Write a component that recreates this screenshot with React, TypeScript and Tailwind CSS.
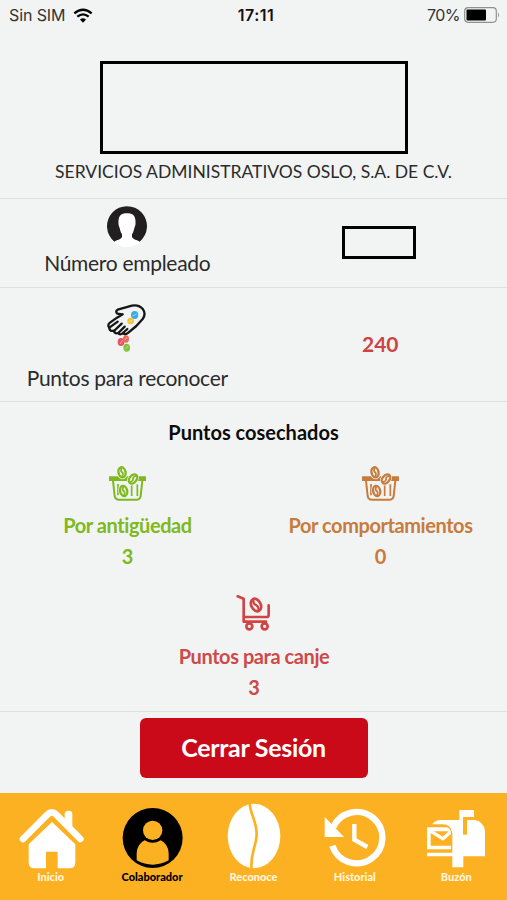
import type { ReactNode } from 'react';
import { clsx } from 'clsx';

function WifiIcon() {
  return (
    <svg className="w-5 h-[15px]" viewBox="222 20 60 45" fill="none" stroke="#000" strokeWidth="7">
      <path d="M226 36Q252 14 278 36" />
      <path d="M235 46Q252 32 269 46" />
      <path d="M252 64L243 54.500Q252 47 261 54.500Z" fill="#000" stroke="none" />
    </svg>
  );
}

function BatteryIcon() {
  return (
    <svg className="w-9 h-4" viewBox="0 0 36 16" fill="none">
      <rect x="0.7" y="0.7" width="31.600" height="14.600" rx="3.500" stroke="#8f9090" strokeWidth="1.200" />
      <rect x="2.500" y="2.500" width="19.500" height="11" rx="1" fill="#000" />
      <path d="M34 5.500Q36 8 34 10.500Z" fill="#8f9090" />
    </svg>
  );
}

function AvatarIcon() {
  return (
    <svg className="w-[42px] h-[42px]" viewBox="0 0 126 126">
      <circle cx="63" cy="63" r="60" fill="#fff" />
      <path d="M25 107A60 60 0 1 1 101 107C94 101 80 101 78 92V85C84 77 84 67 88 58C91 32 84 22 63 22C42 22 35 32 38 58C42 67 42 77 48 85V92C46 101 32 101 25 107Z" fill="#221f20" />
    </svg>
  );
}

function HandIcon() {
  return (
    <svg className="w-[42px] h-[52px]" viewBox="52 38 126 156" fill="none">
      <path
        d="M101 72L86 70Q79 64 87 58L130 46Q151 42 163 57Q173 71 162 86L143 107L119 127Q109 136 103 128Q94 136 88 128Q78 132 76 121Q62 124 62 112Q55 104 64 97L85 82L102 72"
        stroke="#161616" strokeWidth="7" strokeLinejoin="round" strokeLinecap="round"
      />
      <path d="M62 112L87 94M76 122L99 100M89 128L108 109M103 128L116 116" stroke="#161616" strokeWidth="7" strokeLinecap="round" />
      <ellipse cx="138" cy="74" rx="11" ry="12" fill="#3cabe4" />
      <ellipse cx="126" cy="92" rx="10" ry="10" fill="#f6c431" />
      <ellipse cx="97" cy="155" rx="10" ry="12" fill="#e95262" />
      <ellipse cx="112" cy="146" rx="9" ry="11" fill="#ee6655" />
      <ellipse cx="114" cy="172" rx="10" ry="12" fill="#80c13d" />
      <path d="M132 77L144 71M120 95L132 89M94 161L102 149M108 150L116 140M109 178L119 166" stroke="#f2f4f4" strokeWidth="1.500" />
    </svg>
  );
}

function Bean({ x, y, angle }: { x: number; y: number; angle: number }) {
  return (
    <g transform={`translate(${x} ${y}) rotate(${angle})`}>
      <ellipse rx="16" ry="21" fill="#f2f4f4" />
      <ellipse rx="10.500" ry="15.500" fill="none" stroke="currentColor" strokeWidth="7" />
      <path d="M2 -13Q-5 -4 0 0Q5 4 -2 13" fill="none" stroke="currentColor" strokeWidth="5" />
    </g>
  );
}

function BasketIcon() {
  return (
    <svg className="w-10 h-9" viewBox="54 31 120 108" fill="none">
      <path d="M57 62H168V76H57Z" fill="currentColor" />
      <path d="M69 75L74 121Q76 132 87 132H139Q150 132 152 121L157 75" stroke="currentColor" strokeWidth="6" />
      <path d="M84 85V119M125 86V121M142 86V121" stroke="currentColor" strokeWidth="5" />
      <Bean x={96} y={50} angle={-12} />
      <Bean x={129} y={70} angle={38} />
      <Bean x={101} y={106} angle={-14} />
    </svg>
  );
}

function CartIcon() {
  return (
    <svg className="w-[38px] h-10" viewBox="47 27 114 120" fill="none" stroke="#d04444" strokeWidth="8" strokeLinecap="round" strokeLinejoin="round">
      <path d="M55 37L73 44V113H140" />
      <path d="M75 99H142Q148 99 148 92V64" />
      <circle cx="90" cy="127" r="9" fill="#f2f4f4" />
      <circle cx="136" cy="127" r="9" fill="#f2f4f4" />
      <ellipse cx="110" cy="63" rx="14" ry="20" transform="rotate(-28 110 63)" />
      <path d="M102 47Q101 60 110 63Q118 67 118 79" strokeWidth="7" />
    </svg>
  );
}

function HomeIcon() {
  return (
    <svg className="w-[68px] h-[66px]" viewBox="50 39 204 198">
      <path d="M193 110V71Q193 62 205 62Q216 62 216 71V124Z" fill="#fff" />
      <path d="M76 155L143 88Q155 76 167 88L232 155" fill="none" stroke="#fcb122" strokeWidth="22" />
      <path d="M68 147L141 74Q154 60 168 74L240 147" fill="none" stroke="#fff" strokeWidth="20" strokeLinecap="round" />
      <path d="M85 163L155 96L225 163V217Q225 235 208 235H172V185H137V235H102Q85 235 85 217Z" fill="#fff" />
    </svg>
  );
}

function UserIcon() {
  return (
    <svg className="w-[68px] h-[66px]" viewBox="354 39 204 198">
      <circle cx="458" cy="144" r="90" fill="#000" />
      <circle cx="458" cy="121" r="29" fill="#fcb122" />
      <path d="M410 211V190Q411 162 434 151Q458 166 482 151Q505 162 506 190V211Q458 237 410 211Z" fill="#fcb122" />
    </svg>
  );
}

function CoffeeBeanIcon() {
  return (
    <svg className="w-[68px] h-[66px]" viewBox="658 39 204 198">
      <ellipse cx="763" cy="138" rx="79" ry="97" fill="#fff" />
      <path d="M750 36C750 72 771 91 771 132C771 168 750 190 756 240" fill="none" stroke="#fcb122" strokeWidth="8" />
    </svg>
  );
}

function HistoryIcon() {
  return (
    <svg className="w-[68px] h-[66px]" viewBox="201 39 204 198" fill="none" stroke="#fff">
      <path d="M238 111A77 77 0 1 1 235 167" strokeWidth="19" />
      <path d="M212 81V141H270Z" fill="#fff" stroke="none" />
      <path d="M301 102V149L340 171" strokeWidth="13" />
    </svg>
  );
}

function MailboxIcon() {
  return (
    <svg className="w-[68px] h-[66px]" viewBox="505 39 204 198">
      <path d="M535 103Q545 90 562 90H663Q691 94 694 124V199H629V232H596V199H520V188H596V130Q592 103 568 103Z" fill="#fff" />
      <path d="M520 112H580Q592 117 592 132V178H520Z" fill="#fff" />
      <path d="M531 124H582Q592 128 592 140V167H531Z" fill="#fcb122" />
      <path d="M528 122L568 146L588 128" fill="none" stroke="#fff" strokeWidth="10" />
      <path d="M628 81H640V134H628Z" fill="#fcb122" />
      <path d="M617 60H661V81H628V95H617Z" fill="#fff" />
    </svg>
  );
}

interface TabProps {
  label: string;
  icon: ReactNode;
  active?: boolean;
}

function Tab({ label, icon, active }: TabProps) {
  return (
    <button className="flex flex-col items-center pt-[10px]">
      {icon}
      <span className={clsx('text-[11px] leading-4 font-black', active ? 'text-black' : 'text-[#fff6dc]')}>{label}</span>
    </button>
  );
}

interface PointsProps {
  label: string;
  value: number;
  icon: ReactNode;
  className: string;
}

function Points({ label, value, icon, className }: PointsProps) {
  return (
    <div className={clsx('flex flex-col items-center font-bold text-[20px] leading-[31px]', className)}>
      {icon}
      <span className="mt-2 whitespace-nowrap tracking-[-0.43px]">{label}</span>
      <span>{value}</span>
    </div>
  );
}

export default function App() {
  return (
    <div className="w-[507px] h-[900px] flex flex-col overflow-hidden bg-[#f2f4f4] text-[#2b2b2b] font-['Lato',sans-serif]">
      {/* Status bar */}
      <div className="h-[30px] shrink-0 grid grid-cols-3 items-center pl-[9px] pr-[7px] font-['Inter',sans-serif] text-[16px] text-[#333]">
        <div className="flex items-center gap-2">
          <span className="tracking-[-0.1px]">Sin SIM</span>
          <WifiIcon />
        </div>
        <span className="pl-[3px] text-center font-semibold tracking-[0.5px] text-[#111]">17:11</span>
        <div className="flex items-center justify-end gap-1">
          <span className="tracking-[-0.5px]">70%</span>
          <BatteryIcon />
        </div>
      </div>

      {/* Company */}
      <div className="h-[169px] shrink-0 flex flex-col items-center pt-[31px] border-b border-[#dfe1e1]">
        <div className="w-[308px] h-[93px] border-[3px] border-black" />
        <span className="mt-[6px] text-[17.5px] leading-6 whitespace-nowrap">SERVICIOS ADMINISTRATIVOS OSLO, S.A. DE C.V.</span>
      </div>

      {/* Employee number */}
      <div className="h-[89px] shrink-0 grid grid-cols-2 border-b border-[#dfe1e1]">
        <div className="flex flex-col items-center pt-[7px] pl-px">
          <AvatarIcon />
          <span className="mt-px text-[21px] leading-7 tracking-[-0.3px]">Número empleado</span>
        </div>
        <div className="flex items-center justify-center pr-[3px] pb-px">
          <div className="w-[74px] h-[33px] border-[3px] border-black" />
        </div>
      </div>

      {/* Points to give */}
      <div className="h-[114px] shrink-0 grid grid-cols-2 border-b border-[#dfe1e1]">
        <div className="flex flex-col items-center pt-[15px] pl-px">
          <HandIcon />
          <span className="mt-[9px] text-[21px] leading-7 tracking-[-0.3px]">Puntos para reconocer</span>
        </div>
        <div className="flex items-center justify-center pb-[2px] font-bold text-[21px] text-[#cc4444]">240</div>
      </div>

      {/* Harvested points */}
      <div className="h-[310px] shrink-0 flex flex-col border-b border-[#dfe1e1]">
        <h2 className="mt-[15px] text-center text-[20px] leading-[30px] font-bold text-[#0c0c0c]">Puntos cosechados</h2>
        <div className="mt-[19px] grid grid-cols-2 pl-px">
          <Points label="Por antigüedad" value={3} icon={<BasketIcon />} className="text-[#7eb91d]" />
          <Points label="Por comportamientos" value={0} icon={<BasketIcon />} className="text-[#c77b3c]" />
        </div>
        <div className="mt-[21px] pl-px">
          <Points label="Puntos para canje" value={3} icon={<CartIcon />} className="text-[#cc4a4a]" />
        </div>
      </div>

      <div className="h-[81px] shrink-0 flex justify-center pt-[6px]">
        <button className="w-[228px] h-[60px] rounded-[6px] bg-[#cb0a19] text-white text-[25px] font-bold tracking-[-0.3px]">Cerrar Sesión</button>
      </div>

      {/* Bottom tabs */}
      <nav className="h-[107px] shrink-0 grid grid-cols-5 bg-[#fcb122]">
        <Tab label="Inicio" icon={<HomeIcon />} />
        <Tab label="Colaborador" icon={<UserIcon />} active />
        <Tab label="Reconoce" icon={<CoffeeBeanIcon />} />
        <Tab label="Historial" icon={<HistoryIcon />} />
        <Tab label="Buzón" icon={<MailboxIcon />} />
      </nav>
    </div>
  );
}
